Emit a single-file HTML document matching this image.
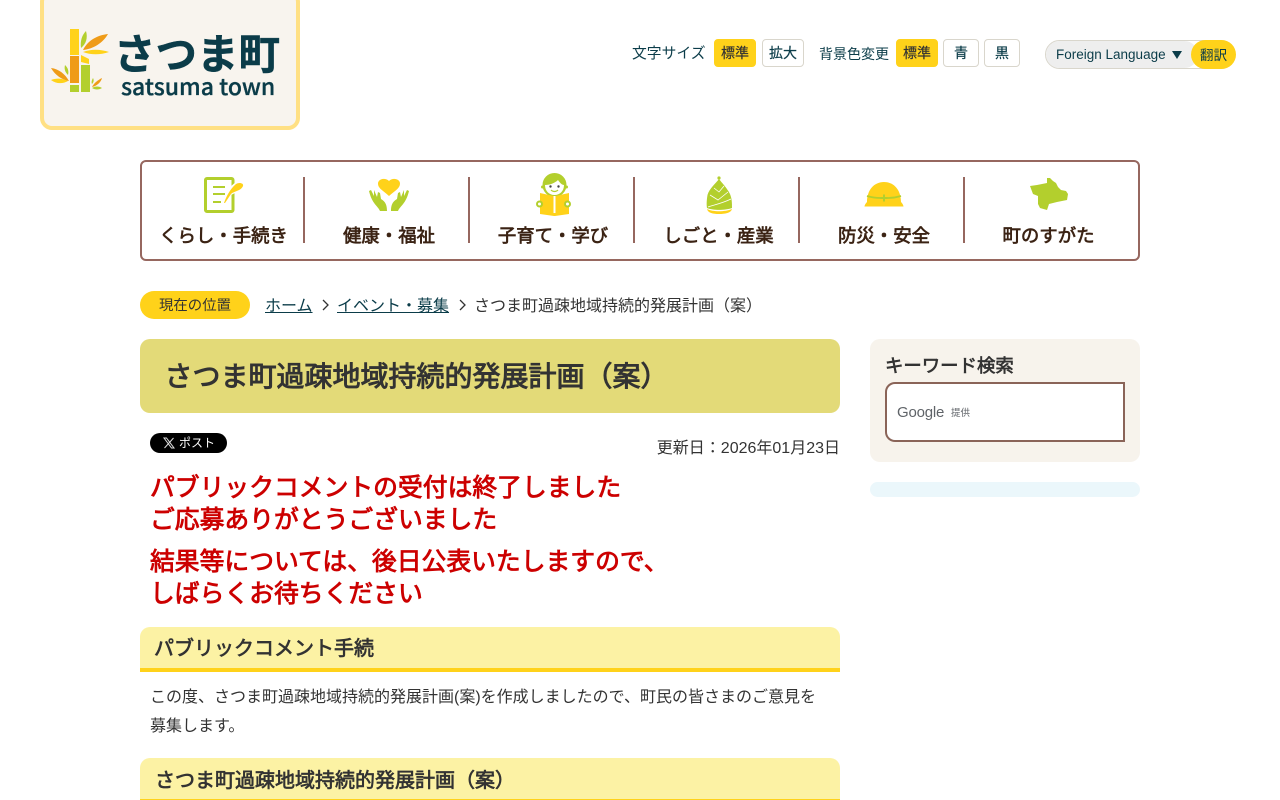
<!DOCTYPE html>
<html lang="ja"><head><meta charset="utf-8"><title>さつま町過疎地域持続的発展計画（案）</title>
<style>
html,body{margin:0;padding:0;background:#fff}
body{width:1280px;height:800px;overflow:hidden;position:relative;font-family:"Liberation Sans","Noto Sans CJK JP",sans-serif;color:#333;font-size:16px}
.a{position:absolute;white-space:nowrap}
.btn{position:absolute;box-sizing:border-box;border:1px solid #d9d6cc;border-radius:4px;background:#fff;color:#0b3c49;font-size:14px;text-align:center;top:39px;height:28px;line-height:26px;-webkit-text-stroke:.2px currentColor}
.btn.on{background:#ffd21a;border-color:#ffd21a;color:#333}
.sep{position:absolute;top:177px;width:2px;height:66px;background:#96675f}
.nl{position:absolute;top:223px;height:26px;line-height:26px;font-size:18.4px;color:#3b2314;text-align:center;white-space:nowrap;-webkit-text-stroke:.66px #3b2314}
a{color:#0b3c49}
.red{left:150px;font-size:24.800px;line-height:32px;color:#cc0000;-webkit-text-stroke:.85px #cc0000}
</style></head><body>

<div class="a" style="left:40px;top:-10px;width:260px;height:140px;box-sizing:border-box;background:#f8f4ee;border:4px solid #ffe084;border-radius:12px"></div>
<svg class="a" style="left:50px;top:28px" width="60" height="66" viewBox="0 0 60 66">
<rect x="20" y="1" width="9" height="26" fill="#ffd21a"/><rect x="20" y="28" width="9" height="27" fill="#ef9b17"/><rect x="20" y="57" width="9" height="7" fill="#b3cf2d"/>
<path d="M31 27L39 31V36L31 34Z" fill="#ffd21a"/><rect x="31" y="37" width="9" height="27" fill="#b3cf2d"/>
<path d="M31 20C30 13 32 7 36 3 38 10 36 16 31 20Z" fill="#b3cf2d"/>
<path d="M33 22C38 12 48 7 58 6 53 15 43 21 33 22Z" fill="#ef9b17"/>
<path d="M33 24C41 21 50 21 59 24 50 27 41 27 33 24Z" fill="#ffd21a"/>
<path d="M18 47C15 44 14 41 15 37 18 40 19 43 18 47Z" fill="#b3cf2d"/>
<path d="M19 53C12 52 5 47 1 40 9 41 15 46 19 53Z" fill="#ef9b17"/>
<path d="M18 53C12 50 6 50 1 52 6 56 13 56 18 53Z" fill="#ffd21a"/>
<path d="M42 56C41 54 42 52 43 50 44 52 44 54 42 56Z" fill="#b3cf2d"/>
<path d="M42 59C44 55 48 52 52 50 51 54 47 58 42 59Z" fill="#ef9b17"/>
<path d="M42 60C45 58 49 58 52 60 49 62 45 62 42 60Z" fill="#b3cf2d"/>
</svg>
<div class="a" style="left:114px;top:26px;font-size:41.5px;line-height:50px;font-weight:bold;color:#0b3c49;font-family:'Noto Sans CJK JP',sans-serif;-webkit-text-stroke:.5px #0b3c49">さつま町</div>
<div class="a" style="left:121px;top:71px;font-size:23px;line-height:28px;color:#0b3c49;font-family:'Noto Sans CJK JP',sans-serif;font-weight:500;-webkit-text-stroke:.3px #0b3c49">satsuma town</div>

<div class="a" style="left:632px;top:44px;font-size:14.800px;line-height:20px;color:#0b3c49">文字サイズ</div>
<div class="btn on" style="left:714px;width:42px">標準</div>
<div class="btn" style="left:762px;width:42px">拡大</div>
<div class="a" style="left:819px;top:44px;font-size:14px;line-height:20px;color:#0b3c49">背景色変更</div>
<div class="btn on" style="left:896px;width:42px">標準</div>
<div class="btn" style="left:943px;width:36px">青</div>
<div class="btn" style="left:984px;width:36px">黒</div>
<div class="a" style="left:1045px;top:40px;width:190px;height:29px;box-sizing:border-box;border:1px solid #d9d6cc;border-radius:15px;background:#fff"></div>
<div class="a" style="left:1046px;top:41px;width:152px;height:27px;border-radius:14px;background:#eee;font-size:13.500px;line-height:27px;color:#0b3c49;text-indent:10px">Foreign Language</div>
<svg class="a" style="left:1172px;top:51px" width="10" height="8" viewBox="0 0 10 8"><path d="M0 0H10L5 8Z" fill="#0b3c49"/></svg>
<div class="a" style="left:1191px;top:40px;width:45px;height:29px;border-radius:15px;background:#ffd21a;font-size:13.600px;line-height:32px;text-align:center;color:#0b3c49">翻訳</div>

<div class="a" style="left:140px;top:160px;width:1000px;height:101px;box-sizing:border-box;border:2px solid #96675f;border-radius:6px"></div>
<div class="sep" style="left:303px"></div><div class="sep" style="left:468px"></div><div class="sep" style="left:633px"></div><div class="sep" style="left:798px"></div><div class="sep" style="left:963px"></div>

<svg class="a" style="left:203px;top:176px" width="44" height="38" viewBox="0 0 44 38">
<rect x="2.5" y="2.500" width="27.500" height="33" rx="1.500" fill="none" stroke="#b3cf2d" stroke-width="3"/>
<path d="M10 11H22M10 18H22M10 26H18" stroke="#b3cf2d" stroke-width="2" fill="none"/>
<path d="M19 30L27 11 34 5C37 3 42 6 41 10 39 15 35 16 32 17L26 20Z" fill="#fff"/>
<path d="M21 27C23 21 27 13 33 8 36 6 41 7 40 10 38 15 31 15 28 18L22 27Z" fill="#ffd21a"/>
</svg>
<svg class="a" style="left:368px;top:178px" width="42" height="34" viewBox="0 0 42 34">
<path d="M21 18C14 12 10 10 10 5.500 10 1 17-1 21 3 25-1 32 1 32 5.500 32 10 28 12 21 18Z" fill="#ffd21a"/>
<path d="M1 13L3 12 6 18 6 12 9 19 10 14 12 15 13 21C16 23 19 25 19 33H12C10 28 4 26 1 13Z" fill="#b3cf2d"/>
<path d="M41 13L39 12 36 18 36 12 33 19 32 14 30 15 29 21C26 23 23 25 23 33H30C32 28 38 26 41 13Z" fill="#b3cf2d"/>
</svg>
<svg class="a" style="left:535px;top:173px" width="38" height="45" viewBox="0 0 38 45">
<circle cx="19.500" cy="12" r="12" fill="#b3cf2d"/><circle cx="7.500" cy="14" r="1.500" fill="#b3cf2d"/><circle cx="31.500" cy="14" r="1.500" fill="#b3cf2d"/>
<path d="M10 12C15 12 20 10 23 7 25 10 27 12 29 12 29 18 25 22 19.500 22 14 22 10 18 10 12Z" fill="#fff"/>
<circle cx="15.500" cy="13.500" r="1.200" fill="#444"/><circle cx="23.500" cy="13.500" r="1.200" fill="#444"/><path d="M16 17C18 19 21 19 23 17" stroke="#b3cf2d" stroke-width="1.200" fill="none"/>
<path d="M5 20L18.500 23H20.500L34 20V41L20 43H19L5 41Z" fill="#ffd21a"/><rect x="18.500" y="23" width="2" height="17" fill="#fff"/>
<circle cx="4.500" cy="31" r="2.500" fill="#fff" stroke="#b3cf2d" stroke-width="2"/><circle cx="32.500" cy="31" r="2.500" fill="#fff" stroke="#b3cf2d" stroke-width="2"/>
</svg>
<svg class="a" style="left:705px;top:175px" width="28" height="40" viewBox="0 0 28 40">
<circle cx="14" cy="3" r="1.600" fill="#b3cf2d"/><path d="M14 4C11 8 4 14 2.500 20 1.500 26 1.500 30 2 33 8 35.500 20 35.500 27 33 27 28 27 24 25 19 22 13 17 8 14 4Z" fill="#b3cf2d"/>
<path d="M9 13L14 17 19 11M5 20L13 25 23 17M3 32C9 30 18 28 26 24" stroke="#fff" stroke-width=".8" fill="none"/>
<path d="M2 34C8 37 20 37 27 34 26 38 20 39 14 39 8 39 3 38 2 34Z" fill="#ffd21a"/>
</svg>
<svg class="a" style="left:864px;top:181px" width="40" height="27" viewBox="0 0 40 27">
<path d="M3 21C3 9 10 1 20 1 30 1 37 9 37 21 39 23 39.500 25 39.500 25.500H.5C.5 25 1 23 3 21Z" fill="#ffd21a"/>
<path d="M3 15C8 16.500 13 17 17 17M23 17C27 17 32 16.500 37 15" stroke="#b3cf2d" stroke-width="1.800" fill="none"/>
<path d="M20 13.500V20.500M16.500 17H23.500" stroke="#b3cf2d" stroke-width="2"/>
</svg>
<svg class="a" style="left:1029px;top:177px" width="40" height="34" viewBox="0 0 40 34">
<path d="M1 9L8 8 13 7 18 6 18 1 21 1 24 4 27 6 29 10 32 13 37 14 39 17 38 23 33 24 28 25 20 27 18 33 11 31 9 27 9 19 4 17Z" fill="#b3cf2d"/>
</svg>

<div class="nl" style="left:142px;width:163px">くらし・手続き</div>
<div class="nl" style="left:306.500px;width:165px">健康・福祉</div>
<div class="nl" style="left:470.500px;width:165px">子育て・学び</div>
<div class="nl" style="left:636px;width:165px">しごと・産業</div>
<div class="nl" style="left:801.500px;width:165px">防災・安全</div>
<div class="nl" style="left:966px;width:165px">町のすがた</div>

<div class="a" style="left:140px;top:291px;width:110px;height:28px;border-radius:14px;background:#ffd21a;text-align:center;font-size:14.4px;line-height:30px">現在の位置</div>
<div class="a" style="left:265px;top:296px;line-height:22px"><a href="#">ホーム</a></div>
<svg class="a" style="left:321px;top:298px" width="9" height="14" viewBox="0 0 9 14"><path d="M2 2L7 7 2 12" fill="none" stroke="#333" stroke-width="1.300"/></svg>
<div class="a" style="left:337px;top:296px;line-height:22px"><a href="#">イベント・募集</a></div>
<svg class="a" style="left:458px;top:298px" width="9" height="14" viewBox="0 0 9 14"><path d="M2 2L7 7 2 12" fill="none" stroke="#333" stroke-width="1.300"/></svg>
<div class="a" style="left:474px;top:296px;line-height:22px">さつま町過疎地域持続的発展計画（案）</div>

<div class="a" style="left:140px;top:339px;width:700px;height:74px;border-radius:10px;background:#e3da78"></div>
<div class="a" style="left:164.500px;top:358px;font-size:28px;line-height:38px;color:#333;-webkit-text-stroke:.95px #333">さつま町過疎地域持続的発展計画（案）</div>

<div class="a" style="left:150px;top:433px;width:77px;height:20px;border-radius:10px;background:#000"></div>
<svg class="a" style="left:163px;top:437px" width="12" height="12" viewBox="0 0 12 12"><path d="M1 1H3.500L11 11H8.500ZM10.500 1L1.500 11" fill="none" stroke="#ddd" stroke-width="1"/></svg>
<div class="a" style="left:179px;top:433px;color:#fff;font-size:12px;line-height:21px">ポスト</div>
<div class="a" style="right:440px;top:438px;line-height:22px">更新日：2026年01月23日</div>

<div class="a red" style="top:473px">パブリックコメントの受付は終了しました<br>ご応募ありがとうございました</div>
<div class="a red" style="top:547px">結果等については、後日公表いたしますので、<br>しばらくお待ちください</div>

<div class="a" style="left:140px;top:627px;width:700px;height:45px;box-sizing:border-box;border-bottom:4px solid #ffd21a;border-radius:10px 10px 0 0;background:#fcf2a4"></div>
<div class="a" style="left:154px;top:635px;font-size:20px;line-height:28px;color:#333;-webkit-text-stroke:.7px #333">パブリックコメント手続</div>
<div class="a" style="left:150px;top:683px;line-height:29px">この度、さつま町過疎地域持続的発展計画(案)を作成しましたので、町民の皆さまのご意見を<br>募集します。</div>
<div class="a" style="left:140px;top:758px;width:700px;height:42px;box-sizing:border-box;border-bottom:1px solid #ffd21a;border-radius:10px 10px 0 0;background:#fcf2a4"></div>
<div class="a" style="left:155px;top:767px;font-size:20px;line-height:28px;color:#333;-webkit-text-stroke:.7px #333">さつま町過疎地域持続的発展計画（案）</div>

<div class="a" style="left:870px;top:339px;width:270px;height:123px;border-radius:10px;background:#f7f3ec"></div>
<div class="a" style="left:885px;top:353px;font-size:18.400px;line-height:26px;color:#333;-webkit-text-stroke:.66px #333">キーワード検索</div>
<div class="a" style="left:885px;top:382px;width:240px;height:60px;box-sizing:border-box;border:2px solid #8a6458;border-radius:10px 0 0 10px;background:#fff"></div>
<div class="a" style="left:897px;top:403px;font-size:15px;line-height:20px;color:#5f6368;letter-spacing:-.2px">Google</div>
<div class="a" style="left:951px;top:407px;font-size:9.500px;line-height:14px;color:#5f6368">提供</div>
<div class="a" style="left:870px;top:482px;width:270px;height:15px;border-radius:8px;background:#ebf7fb"></div>
</body></html>
